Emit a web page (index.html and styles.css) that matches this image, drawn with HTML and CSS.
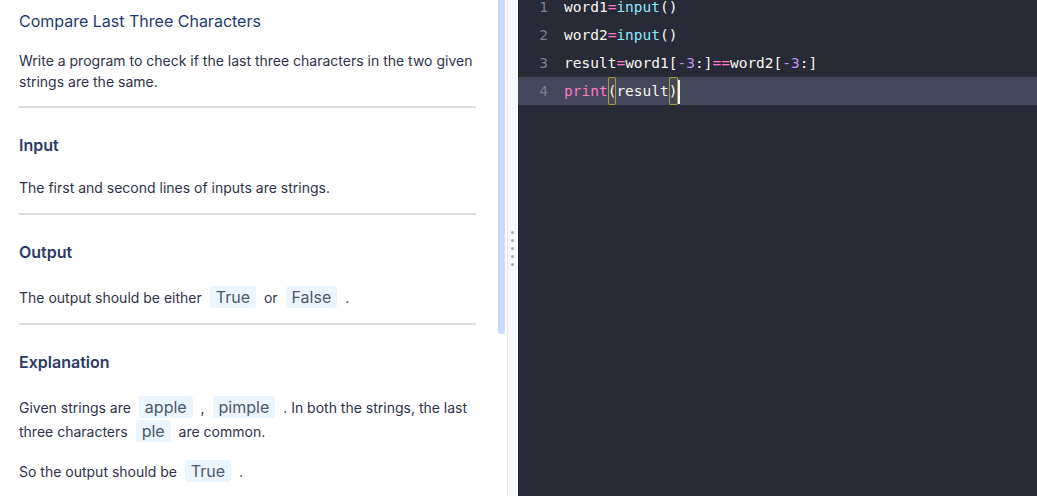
FILE: index.html
```html
<!DOCTYPE html>
<html>
<head>
<meta charset="utf-8">
<link rel="stylesheet" href="styles.css">
</head>
<body>
<div class="app">
  <div class="left">
    <div class="content">
      <h1 class="title">Compare Last Three Characters</h1>
      <p class="para intro">Write a program to check if the last three characters in the two given strings are the same.</p>
      <hr class="rule">
      <h2 class="heading">Input</h2>
      <p class="para">The first and second lines of inputs are strings.</p>
      <hr class="rule">
      <h2 class="heading">Output</h2>
      <p class="para tall">The output should be either <span class="chip">True</span> or <span class="chip">False</span> .</p>
      <hr class="rule">
      <h2 class="heading">Explanation</h2>
      <p class="para tall">Given strings are <span class="chip">apple</span> , <span class="chip">pimple</span> . In both the strings, the last three characters <span class="chip">ple</span> are common.</p>
      <p class="para next">So the output should be <span class="chip">True</span> .</p>
    </div>
    <div class="track"><div class="thumb"></div></div>
  </div>
  <div class="divider">
    <div class="dots"><i></i><i></i><i></i><i></i><i></i></div>
  </div>
  <div class="editor">
    <div class="code">
      <div class="line"><span class="ln">1</span><span class="src"><span class="v">word1</span><span class="op">=</span><span class="fn">input</span><span class="v">()</span></span></div>
      <div class="line"><span class="ln">2</span><span class="src"><span class="v">word2</span><span class="op">=</span><span class="fn">input</span><span class="v">()</span></span></div>
      <div class="line"><span class="ln">3</span><span class="src"><span class="v">result</span><span class="op">=</span><span class="v">word1[</span><span class="num">-3</span><span class="v">:]</span><span class="op">==</span><span class="v">word2[</span><span class="num">-3</span><span class="v">:]</span></span></div>
      <div class="line active"><span class="ln">4</span><span class="src"><span class="kw">print</span><span class="v match">(</span><span class="v">result</span><span class="v match">)</span><span class="cursor"></span></span></div>
    </div>
  </div>
</div>
</body>
</html>
```

FILE: styles.css
```css
html, body {
  margin: 0;
  padding: 0;
  height: 100%;
  overflow: hidden;
}
body {
  font-family: Inter, "Noto Sans", sans-serif;
  background: #ffffff;
}
.app {
  display: flex;
  height: 496px;
  width: 1037px;
}
.left {
  width: 507px;
  display: flex;
  flex-shrink: 0;
  background: #ffffff;
}
.content {
  width: 457px;
  flex-shrink: 0;
  padding: 0 22px 0 19px;
}
.title {
  margin: 11px 0 0 0;
  font-size: 16px;
  line-height: 20px;
  font-weight: 400;
  color: #1f3a6f;
}
.para {
  margin: 21px 0 0 0;
  font-size: 14px;
  line-height: 24px;
  color: #2f3349;
}
.para.intro {
  line-height: 21px;
  margin-top: 19px;
}
.para.tall {
  margin-top: 24px;
}
.para.next {
  margin-top: 16px;
}
.rule {
  margin: 13px 0 0 0;
  border: 0;
  border-top: 2px solid #dddddd;
  height: 0;
}
.intro + .rule {
  margin-top: 14px;
}
.heading {
  margin: 27px 0 0 0;
  font-size: 16px;
  line-height: 20px;
  font-weight: 600;
  color: #2b3a67;
}
.chip {
  display: inline-block;
  background: #eaf5fd;
  color: #4b5a6e;
  font-size: 16px;
  line-height: 22px;
  padding: 0 6px;
  margin: 0 4px;
  border-radius: 3px;
  vertical-align: baseline;
}
.track {
  width: 7px;
  margin-right: 2px;
  flex-shrink: 0;
}
.thumb {
  height: 334px;
  background: #c9dcfa;
  border-radius: 0 0 3px 3px;
}
.divider {
  width: 10px;
  flex-shrink: 0;
  background: #f6f9fe;
  border-left: 1px solid #dfe7f5;
  display: flex;
  align-items: center;
  justify-content: center;
}
.dots {
  display: flex;
  flex-direction: column;
  gap: 5px;
  margin-top: 1px;
  margin-right: 2px;
}
.dots i {
  display: block;
  width: 3px;
  height: 3px;
  background: #a6a8ad;
  border-radius: 50%;
}
.editor {
  flex: 1;
  background: #282a36;
  overflow: hidden;
}
.code {
  margin-top: -7px;
  font-family: "DejaVu Sans Mono", monospace;
  font-size: 14.5px;
}
.line {
  display: flex;
  height: 28px;
  line-height: 28px;
}
.line.active {
  background: #44475a;
}
.ln {
  width: 30px;
  text-align: right;
  color: #7c7f8c;
  flex-shrink: 0;
}
.src {
  margin-left: 16px;
  display: flex;
  align-items: stretch;
  white-space: pre;
}
.v { color: #f8f8f2; }
.op { color: #ff79c6; }
.fn { color: #8be9fd; }
.kw { color: #ff79c6; }
.num { color: #bd93f9; }
.match {
  box-shadow: inset 0 0 0 1px #a89d3a;
  border-radius: 2px;
}
.cursor {
  width: 2px;
  background: #f8f8f2;
  margin: 3px 0 1px 0;
}
```
